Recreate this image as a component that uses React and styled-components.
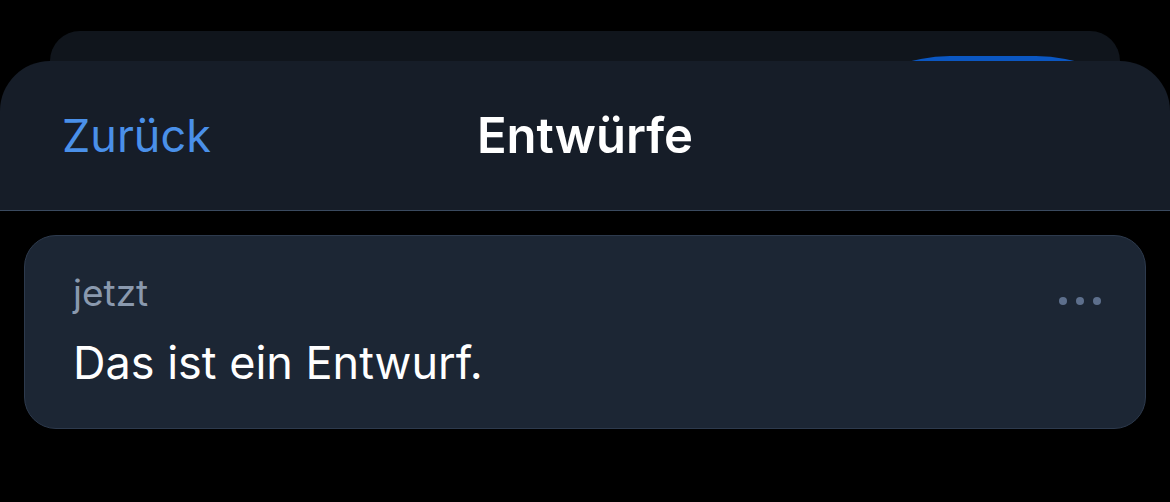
import React from 'react'
import styled, { createGlobalStyle } from 'styled-components'

const GlobalStyle = createGlobalStyle`
  html, body {
    margin: 0;
    padding: 0;
    background: #000;
  }
  body {
    font-family: Inter, "Noto Sans", "Liberation Sans", sans-serif;
    -webkit-font-smoothing: antialiased;
  }
`;

const Page = styled.div`
  width: 1170px;
  height: 502px;
  overflow: hidden;
  padding-top: 31px;
  box-sizing: border-box;
  background: #000;
`;

// the sheet underneath, only its top strip peeks out
const BackSheet = styled.div`
  margin: 0 50px;
  height: 30px;
  overflow: hidden;
  background: #10151c;
  border-radius: 42px 42px 0 0;
  display: flex;
  padding: 25px 0 0 750px;
  box-sizing: border-box;
`;

const BackButton = styled.div`
  width: 386px;
  height: 300px;
  flex-shrink: 0;
  border-radius: 150px;
  background: #0b57c2;
`;

const Sheet = styled.div`
  background: #000;
`;

const Header = styled.header`
  height: 149px;
  background: #161d28;
  border-radius: 50px 50px 0 0;
  border-bottom: 1px solid #3a4a5f;
  display: grid;
  grid-template-columns: 1fr auto 1fr;
  align-items: center;
  padding: 0 62px;
`;

const BackLink = styled.span`
  font-size: 45px;
  color: #4a90e9;
  justify-self: start;
`;

const Title = styled.h1`
  margin: 0;
  font-size: 49px;
  font-weight: 600;
  color: #fff;
`;

const List = styled.div`
  padding: 24px;
`;

const Card = styled.div`
  height: 194px;
  box-sizing: border-box;
  background: #1c2634;
  border: 1px solid #2d3a4d;
  border-radius: 32px;
  padding: 35px 44px 0 48px;
  display: flex;
  justify-content: space-between;
  align-items: flex-start;
`;

const CardBody = styled.div`
  display: flex;
  flex-direction: column;
  gap: 22px;
`;

const Time = styled.span`
  font-size: 37px;
  line-height: 44px;
  color: #8a99ae;
`;

const Text = styled.p`
  margin: 0;
  font-size: 45px;
  line-height: 52px;
  color: #fff;
`;

const Dots = styled.div`
  display: flex;
  gap: 9px;
  padding-top: 26px;
`;

const Dot = styled.span`
  width: 8px;
  height: 8px;
  border-radius: 50%;
  background: #5d6f8c;
`;

export default function App() {
  return (
    <Page>
      <GlobalStyle />
      <BackSheet>
        <BackButton />
      </BackSheet>
      <Sheet>
        <Header>
          <BackLink>Zurück</BackLink>
          <Title>Entwürfe</Title>
          <span />
        </Header>
        <List>
          <Card>
            <CardBody>
              <Time>jetzt</Time>
              <Text>Das ist ein Entwurf.</Text>
            </CardBody>
            <Dots>
              <Dot />
              <Dot />
              <Dot />
            </Dots>
          </Card>
        </List>
      </Sheet>
    </Page>
  )
}
